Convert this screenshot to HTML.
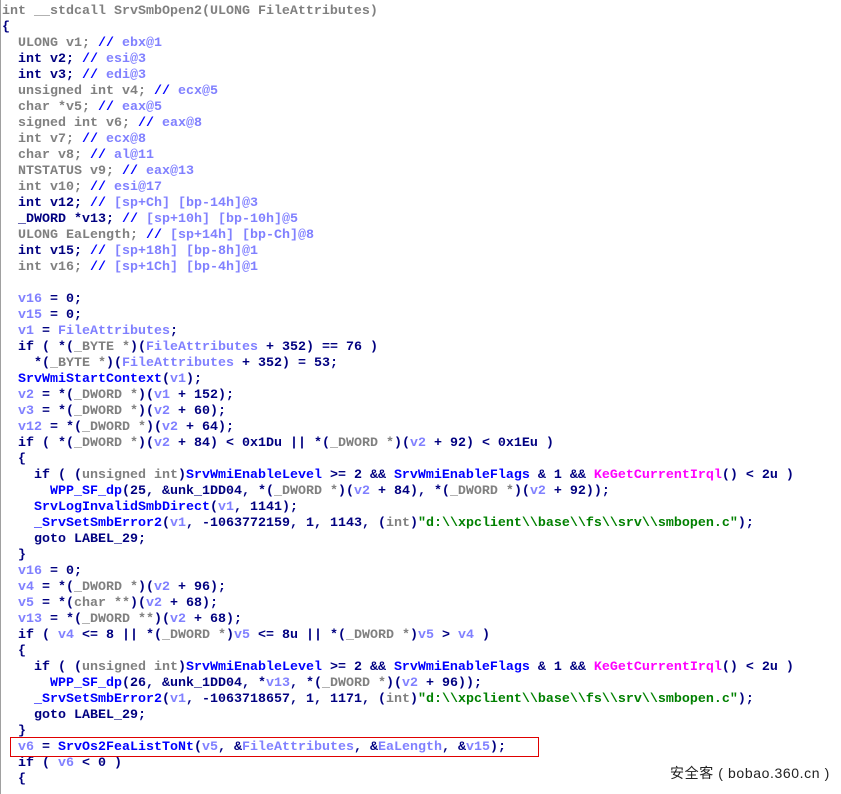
<!DOCTYPE html>
<html><head><meta charset="utf-8"><style>
html,body{margin:0;padding:0;background:#fff;width:841px;height:790px;overflow:hidden}
#code{position:absolute;left:0;top:0;padding-top:4px;border-left:1px solid #a0a0a0;height:790px;padding-left:1px;
font-family:"Liberation Mono",monospace;font-size:13.33px;font-weight:bold;line-height:16px;color:#000080;white-space:pre}
.g{color:#808080}.b{color:#0000ff}.v{color:#8080ff}.m{color:#ff00ff}.s{color:#008000}
#box{position:absolute;left:10px;top:737px;width:527px;height:18px;border:1px solid #e00000}
#wm{position:absolute;left:670px;top:763px;font-family:"Liberation Sans","Noto Sans CJK SC",sans-serif;font-size:14px;letter-spacing:0.6px;color:#222}
</style></head><body>
<div id="code"><span class="g">int __stdcall SrvSmbOpen2(ULONG FileAttributes)</span>
{
  <span class="g">ULONG v1;</span> <span class="b">//</span> <span class="v">ebx@1</span>
  int v2; <span class="b">//</span> <span class="v">esi@3</span>
  int v3; <span class="b">//</span> <span class="v">edi@3</span>
  <span class="g">unsigned int v4;</span> <span class="b">//</span> <span class="v">ecx@5</span>
  <span class="g">char *v5;</span> <span class="b">//</span> <span class="v">eax@5</span>
  <span class="g">signed int v6;</span> <span class="b">//</span> <span class="v">eax@8</span>
  <span class="g">int v7;</span> <span class="b">//</span> <span class="v">ecx@8</span>
  <span class="g">char v8;</span> <span class="b">//</span> <span class="v">al@11</span>
  <span class="g">NTSTATUS v9;</span> <span class="b">//</span> <span class="v">eax@13</span>
  <span class="g">int v10;</span> <span class="b">//</span> <span class="v">esi@17</span>
  int v12; <span class="b">//</span> <span class="v">[sp+Ch] [bp-14h]@3</span>
  _DWORD *v13; <span class="b">//</span> <span class="v">[sp+10h] [bp-10h]@5</span>
  <span class="g">ULONG EaLength;</span> <span class="b">//</span> <span class="v">[sp+14h] [bp-Ch]@8</span>
  int v15; <span class="b">//</span> <span class="v">[sp+18h] [bp-8h]@1</span>
  <span class="g">int v16;</span> <span class="b">//</span> <span class="v">[sp+1Ch] [bp-4h]@1</span>

  <span class="v">v16</span> = 0;
  <span class="v">v15</span> = 0;
  <span class="v">v1</span> = <span class="v">FileAttributes</span>;
  if ( *(<span class="g">_BYTE *</span>)(<span class="v">FileAttributes</span> + 352) == 76 )
    *(<span class="g">_BYTE *</span>)(<span class="v">FileAttributes</span> + 352) = 53;
  <span class="b">SrvWmiStartContext</span>(<span class="v">v1</span>);
  <span class="v">v2</span> = *(<span class="g">_DWORD *</span>)(<span class="v">v1</span> + 152);
  <span class="v">v3</span> = *(<span class="g">_DWORD *</span>)(<span class="v">v2</span> + 60);
  <span class="v">v12</span> = *(<span class="g">_DWORD *</span>)(<span class="v">v2</span> + 64);
  if ( *(<span class="g">_DWORD *</span>)(<span class="v">v2</span> + 84) &lt; 0x1Du || *(<span class="g">_DWORD *</span>)(<span class="v">v2</span> + 92) &lt; 0x1Eu )
  {
    if ( (<span class="g">unsigned int</span>)<span class="b">SrvWmiEnableLevel</span> &gt;= 2 &amp;&amp; <span class="b">SrvWmiEnableFlags</span> &amp; 1 &amp;&amp; <span class="m">KeGetCurrentIrql</span>() &lt; 2u )
      <span class="b">WPP_SF_dp</span>(25, &amp;unk_1DD04, *(<span class="g">_DWORD *</span>)(<span class="v">v2</span> + 84), *(<span class="g">_DWORD *</span>)(<span class="v">v2</span> + 92));
    <span class="b">SrvLogInvalidSmbDirect</span>(<span class="v">v1</span>, 1141);
    <span class="b">_SrvSetSmbError2</span>(<span class="v">v1</span>, -1063772159, 1, 1143, (<span class="g">int</span>)<span class="s">"d:\\xpclient\\base\\fs\\srv\\smbopen.c"</span>);
    goto LABEL_29;
  }
  <span class="v">v16</span> = 0;
  <span class="v">v4</span> = *(<span class="g">_DWORD *</span>)(<span class="v">v2</span> + 96);
  <span class="v">v5</span> = *(<span class="g">char **</span>)(<span class="v">v2</span> + 68);
  <span class="v">v13</span> = *(<span class="g">_DWORD **</span>)(<span class="v">v2</span> + 68);
  if ( <span class="v">v4</span> &lt;= 8 || *(<span class="g">_DWORD *</span>)<span class="v">v5</span> &lt;= 8u || *(<span class="g">_DWORD *</span>)<span class="v">v5</span> &gt; <span class="v">v4</span> )
  {
    if ( (<span class="g">unsigned int</span>)<span class="b">SrvWmiEnableLevel</span> &gt;= 2 &amp;&amp; <span class="b">SrvWmiEnableFlags</span> &amp; 1 &amp;&amp; <span class="m">KeGetCurrentIrql</span>() &lt; 2u )
      <span class="b">WPP_SF_dp</span>(26, &amp;unk_1DD04, *<span class="v">v13</span>, *(<span class="g">_DWORD *</span>)(<span class="v">v2</span> + 96));
    <span class="b">_SrvSetSmbError2</span>(<span class="v">v1</span>, -1063718657, 1, 1171, (<span class="g">int</span>)<span class="s">"d:\\xpclient\\base\\fs\\srv\\smbopen.c"</span>);
    goto LABEL_29;
  }
  <span class="v">v6</span> = <span class="b">SrvOs2FeaListToNt</span>(<span class="v">v5</span>, &amp;<span class="v">FileAttributes</span>, &amp;<span class="v">EaLength</span>, &amp;<span class="v">v15</span>);
  if ( <span class="v">v6</span> &lt; 0 )
  {</div>
<div id="box"></div>
<div id="wm">安全客 ( bobao.360.cn )</div>
</body></html>
